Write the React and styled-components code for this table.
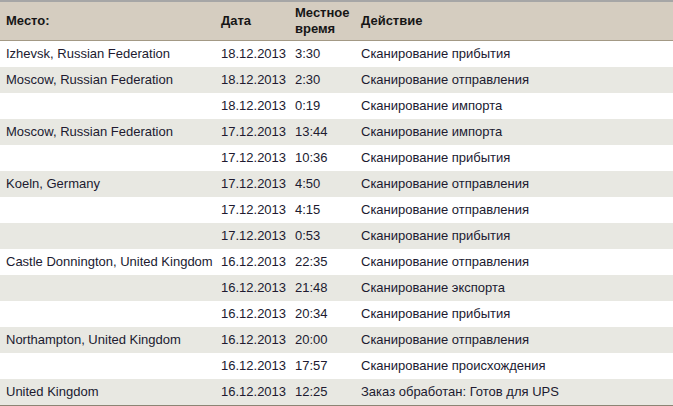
import React from 'react'
import styled, {createGlobalStyle} from 'styled-components'

const GlobalStyle = createGlobalStyle`
    html, body{
        margin: 0;
        padding: 0;
        background: #fff;
    }
`

const rows = [
    {place: 'Izhevsk, Russian Federation', date: '18.12.2013', time: '3:30', action: 'Сканирование прибытия'},
    {place: 'Moscow, Russian Federation', date: '18.12.2013', time: '2:30', action: 'Сканирование отправления'},
    {place: '', date: '18.12.2013', time: '0:19', action: 'Сканирование импорта'},
    {place: 'Moscow, Russian Federation', date: '17.12.2013', time: '13:44', action: 'Сканирование импорта'},
    {place: '', date: '17.12.2013', time: '10:36', action: 'Сканирование прибытия'},
    {place: 'Koeln, Germany', date: '17.12.2013', time: '4:50', action: 'Сканирование отправления'},
    {place: '', date: '17.12.2013', time: '4:15', action: 'Сканирование отправления'},
    {place: '', date: '17.12.2013', time: '0:53', action: 'Сканирование прибытия'},
    {place: 'Castle Donnington, United Kingdom', date: '16.12.2013', time: '22:35', action: 'Сканирование отправления'},
    {place: '', date: '16.12.2013', time: '21:48', action: 'Сканирование экспорта'},
    {place: '', date: '16.12.2013', time: '20:34', action: 'Сканирование прибытия'},
    {place: 'Northampton, United Kingdom', date: '16.12.2013', time: '20:00', action: 'Сканирование отправления'},
    {place: '', date: '16.12.2013', time: '17:57', action: 'Сканирование происхождения'},
    {place: 'United Kingdom', date: '16.12.2013', time: '12:25', action: 'Заказ обработан: Готов для UPS'},
]

export default function App() {
    return (
        <>
            <GlobalStyle/>
            <Table>
                <colgroup>
                    <col style={{width: 215}}/>
                    <col style={{width: 74}}/>
                    <col style={{width: 66}}/>
                    <col/>
                </colgroup>
                <thead>
                    <tr>
                        <Th>Место:</Th>
                        <Th>Дата</Th>
                        <Th>Местное<br/>время</Th>
                        <Th>Действие</Th>
                    </tr>
                </thead>
                <tbody>
                    {
                        rows.map((row, index) => (
                            <Row key={index} $shaded={index % 2 === 1}>
                                <Td>{row.place}</Td>
                                <Td>{row.date}</Td>
                                <Td>{row.time}</Td>
                                <Td>{row.action}</Td>
                            </Row>
                        ))
                    }
                </tbody>
            </Table>
        </>
    )
}

const Table = styled.table`
    width: 673px;
    table-layout: fixed;
    border-collapse: collapse;
    border-top: 2px solid #a6a6a6;
    border-bottom: 2px solid #8c8474;
    font-family: "Liberation Sans", Arial, sans-serif;
    font-size: 13px;
    color: #201a30;
`

const Th = styled.th`
    background: #d5cdc0;
    border-bottom: 1px solid #a39985;
    text-align: left;
    vertical-align: middle;
    font-weight: 700;
    color: #161616;
    line-height: 16px;
    padding: 3px 6px 3px;
    height: 30px;
`

const Row = styled.tr`
    background: ${props => props.$shaded ? '#e8e8e2' : '#ffffff'};
`

const Td = styled.td`
    height: 26px;
    padding: 0 6px;
    vertical-align: middle;
    white-space: nowrap;
    line-height: 16px;
`
